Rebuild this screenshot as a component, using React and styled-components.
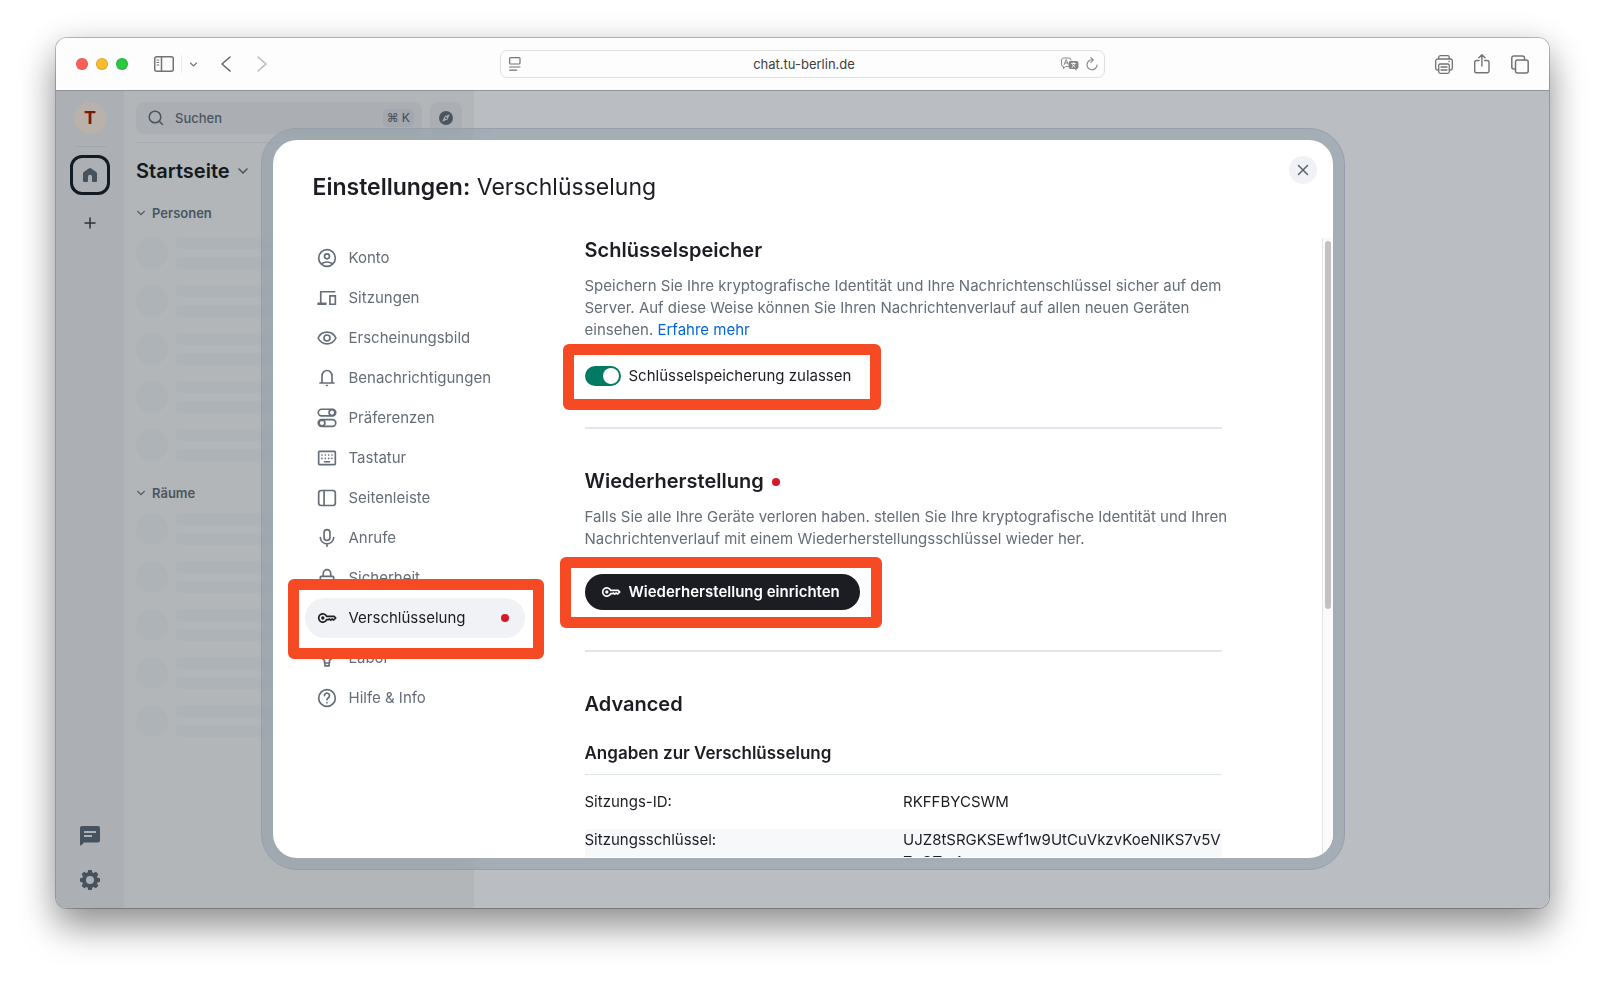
import React, { useState } from "react";
import styled, { createGlobalStyle, css } from "styled-components";

const Global = createGlobalStyle`
  *, *::before, *::after { box-sizing: border-box; }
  body {
    margin: 0;
    background: #fff;
    font-family: Inter, "Liberation Sans", sans-serif;
    color: #1b1d22;
  }
  button { font: inherit; color: inherit; background: none; border: 0; padding: 0; cursor: pointer; }
  h1, h2, h3, p, ul { margin: 0; padding: 0; }
  ul { list-style: none; }
  svg { display: block; flex: none; }
`;

/* ---------- browser window ---------- */

const Page = styled.div`
  height: 100vh;
  min-height: 640px;
  padding: 38px 56px 74px;
  display: flex;
`;

const Window = styled.div`
  flex: 1;
  min-width: 0;
  display: flex;
  flex-direction: column;
  border-radius: 11px;
  overflow: hidden;
  box-shadow: 0 0 0 1px rgba(0, 0, 0, 0.24), 0 20px 36px rgba(0, 0, 0, 0.36), 0 6px 36px rgba(0, 0, 0, 0.14);
`;

const Toolbar = styled.header`
  flex: none;
  height: 53px;
  padding: 0 20px;
  background: #fdfdfd;
  border-bottom: 1px solid #909499;
  display: grid;
  grid-template-columns: 1fr minmax(200px, 605px) 1fr;
  align-items: center;
  color: #737373;
`;

const ToolGroup = styled.div`
  display: flex;
  align-items: center;
  gap: ${(p) => p.$gap}px;
  justify-content: ${(p) => (p.$end ? "flex-end" : "flex-start")};
`;

const Light = styled.button`
  width: 12px;
  height: 12px;
  border-radius: 50%;
  background: ${(p) => p.$color};
  border: 1px solid rgba(0, 0, 0, 0.12);
`;

const SidebarTools = styled.div`
  display: flex;
  align-items: center;
  gap: 7px;
  margin: 0 15px 0 18px;
`;

const ToolDivider = styled.span`
  width: 1px;
  height: 18px;
  background: #e9e9e9;
`;

const NavArrows = styled.div`
  display: flex;
  gap: 26px;
`;

const AddressBar = styled.div`
  height: 28px;
  padding: 0 6px 0 8px;
  border: 1px solid #e0e0e0;
  border-radius: 7px;
  display: flex;
  align-items: center;
  gap: 7px;
`;

const Address = styled.input`
  flex: 1;
  min-width: 0;
  border: 0;
  outline: 0;
  background: none;
  padding: 0 0 0 26px;
  text-align: center;
  font: 400 13px/16px Inter, sans-serif;
  color: #404040;
`;

/* ---------- chat app behind the dialog ---------- */

const AppArea = styled.div`
  position: relative;
  flex: 1;
  min-height: 0;
  display: flex;
  background: #babdc2;
`;

const Rail = styled.nav`
  flex: none;
  width: 68px;
  padding: 11px 0 8px;
  background: #acb0b5;
  color: #46525d;
  display: flex;
  flex-direction: column;
  align-items: center;
`;

const Avatar = styled.button`
  width: 32px;
  height: 32px;
  border-radius: 50%;
  background: #bbb1ab;
  color: #771a0d;
  font-size: 18px;
  line-height: 32px;
  font-weight: 700;
`;

const RailLine = styled.span`
  width: 32px;
  height: 1px;
  margin: 12px 0 8px;
  background: #a1a6ab;
`;

const HomeButton = styled.button`
  width: 40px;
  height: 40px;
  border: 3px solid #121a23;
  border-radius: 12px;
  display: grid;
  place-items: center;
`;

const RailButton = styled.button`
  width: 40px;
  height: 40px;
  display: grid;
  place-items: center;
  margin-top: ${(p) => p.$top || 0};
  color: ${(p) => (p.$dark ? "#2a333c" : "inherit")};
`;

const RoomPanel = styled.aside`
  flex: none;
  width: 350px;
  padding: 11px 12px;
  background: #b2b6b9;
  color: #4a5560;
  display: flex;
  flex-direction: column;
`;

const SearchRow = styled.div`
  display: flex;
  gap: 8px;
  padding-bottom: 8px;
  border-bottom: 1px solid #a5abb0;
`;

const SearchButton = styled.button`
  flex: 1;
  height: 32px;
  padding: 0 8px 0 12px;
  border-radius: 8px;
  background: #abafb4;
  display: flex;
  align-items: center;
  font-size: 13px;
  line-height: 18px;
  font-weight: 500;
  span { flex: 1; text-align: left; padding-left: 11px; }
  kbd {
    height: 18px;
    padding: 0 4px;
    border-radius: 5px;
    background: #a3a8ae;
    font: 500 12px/18px Inter, "DejaVu Sans", sans-serif;
  }
`;

const ExploreButton = styled.button`
  width: 32px;
  height: 32px;
  border-radius: 8px;
  background: #abafb4;
  display: grid;
  place-items: center;
`;

const PanelTitle = styled.button`
  display: flex;
  align-items: center;
  gap: 7px;
  height: 56px;
  font-size: 20px;
  font-weight: 600;
  color: #111921;
  svg { color: #46525d; }
`;

const GroupTitle = styled.button`
  display: flex;
  align-items: center;
  gap: 6px;
  height: 28px;
  font-size: 13px;
  font-weight: 600;
`;

const RoomGroup = styled.section`
  display: flex;
  flex-direction: column;
  gap: ${(p) => p.$gap}px;
  margin-bottom: 18px;
`;

const Placeholders = styled.div`
  display: grid;
  row-gap: 16px;
`;

const Placeholder = styled.div`
  display: grid;
  grid-template-columns: 32px 1fr;
  grid-template-rows: 12px 12px;
  gap: 8px 7px;
  &::before {
    content: "";
    grid-row: 1 / 3;
    border-radius: 50%;
    background: #aeb3b7;
  }
  span { background: #aeb3b7; border-radius: 6px; }
`;

/* ---------- settings dialog ---------- */

const Backdrop = styled.div`
  position: absolute;
  inset: 0;
  display: flex;
  align-items: center;
  justify-content: center;
  padding: 37px 32px 38px;
`;

const Glass = styled.div`
  width: 100%;
  max-width: 1084px;
  height: 100%;
  padding: 11px;
  border: 1px solid #969fab;
  border-radius: 36px;
  background: rgba(136, 150, 164, 0.42);
  backdrop-filter: blur(12px);
  display: flex;
`;

const Dialog = styled.div`
  position: relative;
  flex: 1;
  min-width: 0;
  border-radius: 24px;
  background: #fff;
  display: flex;
  flex-direction: column;
  overflow: hidden;
`;

const DialogHeader = styled.div`
  flex: none;
  height: 98px;
  padding: 16px 16px 0 40px;
  display: flex;
  justify-content: space-between;
  align-items: flex-start;
`;

const Title = styled.h1`
  font-size: 23px;
  line-height: 32px;
  font-weight: 400;
  padding-top: 15px;
  strong { font-weight: 600; }
`;

const CloseButton = styled.button`
  width: 28px;
  height: 28px;
  border-radius: 50%;
  background: #f0f2f5;
  color: #5a636e;
  display: grid;
  place-items: center;
`;

const DialogBody = styled.div`
  flex: 1;
  min-height: 0;
  display: flex;
`;

const Tabs = styled.ul`
  flex: none;
  width: 220px;
  margin: 0 32px;
`;

const TabButton = styled.button`
  width: 100%;
  height: 40px;
  padding: 0 16px 0 12px;
  display: flex;
  align-items: center;
  gap: 12px;
  border-radius: 20px;
  font-size: 15px;
  line-height: 22px;
  text-align: left;
  color: #656d77;
  span { flex: 1; }
  ${(p) =>
    p.$active &&
    css`
      background: #f0f2f5;
      color: #1b1d22;
    `}
`;

const Dot = styled.i`
  flex: none;
  width: 8px;
  height: 8px;
  border-radius: 50%;
  background: #d51928;
`;

const Marked = styled.div`
  position: relative;
  width: ${(p) => (p.$fit ? "fit-content" : "auto")};
  &::after {
    content: "";
    position: absolute;
    inset: ${(p) => p.$inset};
    border: 11px solid #f64a25;
    border-radius: 6px;
    pointer-events: none;
    z-index: 2;
  }
`;

const TabPanel = styled.div`
  flex: 1;
  min-width: 0;
  margin-bottom: 1px;
  padding: 0 100px 0 28px;
  overflow: hidden;
`;

const Section = styled.section`
  padding-bottom: ${(p) => p.$bottom}px;
  margin-bottom: 40px;
  border-bottom: 2px solid #e1e6ec;
  &:last-child { border: 0; margin: 0; }
`;

const Heading = styled.h2`
  display: flex;
  align-items: center;
  gap: 8px;
  font-size: 20px;
  line-height: 25px;
  font-weight: 600;
`;

const Text = styled.p`
  margin: 12px -12px 0 0;
  font-size: 15px;
  line-height: 22px;
  color: #656d77;
  a { color: #0467dd; text-decoration: none; }
`;

const SwitchLabel = styled.label`
  display: flex;
  align-items: center;
  gap: 8px;
  height: 20px;
  font-size: 15px;
  line-height: 18px;
  font-weight: 400;
`;

const Switch = styled.input`
  appearance: none;
  width: 36px;
  height: 20px;
  margin: 0;
  padding: 2px;
  border-radius: 10px;
  background: ${(p) => (p.checked ? "#007a61" : "#818a95")};
  display: flex;
  justify-content: ${(p) => (p.checked ? "flex-end" : "flex-start")};
  &::before {
    content: "";
    width: 16px;
    height: 16px;
    border-radius: 50%;
    background: #fff;
  }
`;

const PrimaryButton = styled.button`
  height: 36px;
  padding: 0 20px 0 16px;
  border-radius: 18px;
  background: #1b1d22;
  color: #fff;
  display: flex;
  align-items: center;
  gap: 8px;
  font-size: 15px;
  line-height: 18px;
  font-weight: 600;
`;

const Spaced = styled.div`
  margin-top: ${(p) => p.$top}px;
`;

const SubHeading = styled.h3`
  margin-top: 24px;
  padding-bottom: 9px;
  border-bottom: 1px solid #dde4ea;
  font-size: 17px;
  line-height: 24px;
  font-weight: 600;
`;

const Details = styled.table`
  width: 100%;
  margin-top: 16px;
  table-layout: fixed;
  border-collapse: collapse;
  font-size: 15px;
  line-height: 22px;
  th, td {
    padding: 0 0 16px;
    font-weight: 400;
    text-align: left;
    vertical-align: top;
    overflow-wrap: anywhere;
  }
  tr:nth-child(even) { background: #f7f8fa; }
`;

const ScrollTrack = styled.div`
  flex: none;
  width: 11px;
  padding: 3px 2px;
  border-left: 1px solid #e6e6e6;
  background: #fafafa;
`;

const ScrollThumb = styled.div`
  height: 60%;
  border-radius: 3px;
  background: #c2c2c2;
`;

/* ---------- icons ---------- */

const Svg = ({ size = 20, w, h, box = "0 0 24 24", sw = 2, fill = "none", children }) => (
  <svg
    width={w || size}
    height={h || size}
    viewBox={box}
    fill={fill}
    stroke={fill === "none" ? "currentColor" : "none"}
    strokeWidth={sw}
    strokeLinecap="round"
    strokeLinejoin="round"
    aria-hidden="true"
  >
    {children}
  </svg>
);

const Chevron = ({ size = 12 }) => (
  <Svg size={size} box="0 0 12 12" sw={1.5}><path d="M2 4l4 4 4-4" /></Svg>
);

const KeyIcon = () => (
  <Svg sw={2}>
    <path d="M11.600 10H20.500L22.500 12 20 14.400 18.200 13.200 16.500 14.600 14.800 13.200 13.500 14H11.600A5 5 0 1 1 11.600 10z" />
    <circle cx="7" cy="12" r="2" fill="currentColor" stroke="none" />
  </Svg>
);

const icons = {
  account: (
    <Svg>
      <circle cx="12" cy="12" r="10" />
      <circle cx="12" cy="10" r="3" />
      <path d="M5.5 18.8c1.9-1.3 4-2 6.500-2s4.600.7 6.500 2" />
    </Svg>
  ),
  devices: (
    <Svg>
      <path d="M4.500 18V4.500H21" strokeLinecap="square" />
      <path d="M2 19h8" strokeWidth="3" strokeLinecap="square" />
      <path d="M15.500 9.500H22V19.500H15.500z" strokeLinejoin="miter" />
    </Svg>
  ),
  eye: (
    <Svg>
      <path d="M1.300 12C3.500 7.500 7.400 5 12 5s8.500 2.500 10.700 7c-2.200 4.500-6.100 7-10.700 7s-8.500-2.500-10.700-7z" />
      <circle cx="12" cy="12" r="3.600" />
    </Svg>
  ),
  bell: (
    <Svg>
      <path d="M3.500 18h17M6 18V9.500a6 6.500 0 0 1 12 0V18" />
      <path d="M11.500 21h1" />
    </Svg>
  ),
  prefs: (
    <Svg>
      <rect x="1.500" y="1.500" width="21" height="8" rx="4" />
      <circle cx="18" cy="5.500" r="3.500" />
      <rect x="1.500" y="14" width="21" height="8" rx="4" />
      <circle cx="6" cy="18" r="3.500" />
    </Svg>
  ),
  keyboard: (
    <Svg>
      <rect x="2" y="4" width="20" height="16" rx="1" />
      <path d="M6 8.500h.01M10 8.500h.01M14 8.500h.01M18 8.500h.01M6 12.500h.01M10 12.500h.01M14 12.500h.01M18 12.500h.01M9 16.500h6" />
    </Svg>
  ),
  sidebar: (
    <Svg>
      <rect x="2" y="3" width="20" height="18" rx="3" />
      <path d="M8.500 3v18" />
    </Svg>
  ),
  mic: (
    <Svg>
      <rect x="8.500" y="2" width="7" height="13" rx="3.500" />
      <path d="M4 11.500a8 7.500 0 0 0 16 0M12 19v3" />
    </Svg>
  ),
  lock: (
    <Svg>
      <rect x="4" y="10" width="16" height="12" rx="1" />
      <path d="M7.500 10V6.500a4.500 4.500 0 0 1 9 0V10" />
    </Svg>
  ),
  key: <KeyIcon />,
  labs: (
    <Svg>
      <path d="M9 18v-3a7 7 0 1 1 6 0v3zM9.500 18v3.500h5V18" />
    </Svg>
  ),
  help: (
    <Svg>
      <circle cx="12" cy="12" r="10" />
      <path d="M9 9.300a3 3 0 1 1 4.700 2.400c-1.100.8-1.700 1.300-1.700 2.500M12 17.600h.01" />
    </Svg>
  ),
};

const SidebarGlyph = () => (
  <Svg w={20} h={16} box="0 0 20 16" sw={1.5}>
    <rect x="0.750" y="0.750" width="18.500" height="14.500" rx="2" />
    <path d="M7.500 1v14" />
    <path d="M3 4h1.800M3 6.500h1.800M3 9h1.800" strokeWidth="1" />
  </Svg>
);

const Arrow = ({ right }) => (
  <Svg w={10} h={16} box="0 0 10 16" sw={1.6}>
    <path d={right ? "M1 1l8 7-8 7" : "M9 1L1 8l8 7"} stroke={right ? "#b9b9b9" : "#666"} />
  </Svg>
);

const ReaderGlyph = () => (
  <Svg w={12} h={14} box="0 0 12 14" sw={1.200}>
    <rect x="0.600" y="0.600" width="10.400" height="6.400" rx="1" />
    <path d="M0.600 10h10.400M0.600 13.200h7" />
  </Svg>
);

const TranslateGlyph = () => (
  <Svg w={18} h={14} box="0 0 18 14" sw={1}>
    <path d="M7 9.500H4.500L2.500 11.500V9.500A2 2 0 0 1 .5 7.500V3a2 2 0 0 1 2-2H8a2 2 0 0 1 2 2" stroke="#8a8a8a" />
    <path d="M3.200 7.500l2-5 1.800 4.500M4 6h2.500" stroke="#8a8a8a" />
    <path
      d="M9.500 4h6A2 2 0 0 1 17.500 6v4a2 2 0 0 1-2 2v1.800L13.700 12H9.500a2 2 0 0 1-2-2V6a2 2 0 0 1 2-2z"
      fill="#858585"
      stroke="none"
    />
    <path d="M10.500 6.500h4M12.500 5.500v1M11 10.300c1.500-.8 2.400-1.900 2.700-3.800M11.500 7.500c.5 1.200 1.300 2 2.500 2.700" stroke="#fff" strokeWidth=".8" />
  </Svg>
);

const ReloadGlyph = () => (
  <Svg w={12} h={14} box="0 0 12 14" sw={1.200}>
    <path d="M6.500 2.800A5 5 0 1 0 11 8M4.800.6l2.500 2.300-2.400 2.400" stroke="#8a8a8a" />
  </Svg>
);

const PrintGlyph = () => (
  <Svg w={18} h={19} box="0 0 18 19" sw={1.300}>
    <path d="M3.700 4V2.500A1.800 1.800 0 0 1 5.500.700h7a1.800 1.800 0 0 1 1.800 1.800V4M3.700 15H2.500A1.800 1.800 0 0 1 .700 13.200V6a2 2 0 0 1 2-2h12.600a2 2 0 0 1 2 2v7.200a1.800 1.800 0 0 1-1.800 1.800h-1.200" />
    <rect x="3.700" y="9" width="10.600" height="9.300" rx="1.500" />
    <path d="M6 12h6M6 15h6M14 6.500h.3" />
  </Svg>
);

const ShareGlyph = () => (
  <Svg w={16} h={20} box="0 0 16 20" sw={1.400}>
    <path d="M5 6.500H2.500A1.800 1.800 0 0 0 .700 8.300v8.700a1.800 1.800 0 0 0 1.800 1.800h10.700A1.800 1.800 0 0 0 15 17V8.300a1.800 1.800 0 0 0-1.800-1.800h-2.500M7.900 12V1M4.800 3.800L7.900.8 11 3.800" />
  </Svg>
);

const TabsGlyph = () => (
  <Svg w={18} h={19} box="0 0 18 19" sw={1.500}>
    <rect x="4.500" y="5" width="12.700" height="13" rx="2" />
    <path d="M4.500 14H2.800a2 2 0 0 1-2-2V3a2 2 0 0 1 2-2h8.700a2 2 0 0 1 2 2v2" />
  </Svg>
);

/* ---------- content ---------- */

const tabs = [
  ["account", "Konto"],
  ["devices", "Sitzungen"],
  ["eye", "Erscheinungsbild"],
  ["bell", "Benachrichtigungen"],
  ["prefs", "Präferenzen"],
  ["keyboard", "Tastatur"],
  ["sidebar", "Seitenleiste"],
  ["mic", "Anrufe"],
  ["lock", "Sicherheit"],
  ["key", "Verschlüsselung"],
  ["labs", "Labor"],
  ["help", "Hilfe & Info"],
];

const Rooms = ({ title, gap }) => (
  <RoomGroup $gap={gap}>
    <GroupTitle><Chevron size={10} />{title}</GroupTitle>
    <Placeholders>
      {[0, 1, 2, 3, 4].map((n) => (
        <Placeholder key={n}><span /><span /></Placeholder>
      ))}
    </Placeholders>
  </RoomGroup>
);

const BrowserToolbar = () => (
  <Toolbar>
    <ToolGroup $gap={8}>
      <Light $color="#ff5f57" aria-label="Schließen" />
      <Light $color="#febc2e" aria-label="Minimieren" />
      <Light $color="#28c840" aria-label="Vergrößern" />
      <SidebarTools>
        <button aria-label="Seitenleiste"><SidebarGlyph /></button>
        <ToolDivider />
        <button aria-label="Tabgruppen"><Chevron size={9} /></button>
      </SidebarTools>
      <NavArrows>
        <button aria-label="Zurück"><Arrow /></button>
        <button aria-label="Vorwärts"><Arrow right /></button>
      </NavArrows>
    </ToolGroup>
    <AddressBar>
      <ReaderGlyph />
      <Address aria-label="Adresse" defaultValue="chat.tu-berlin.de" />
      <TranslateGlyph />
      <ReloadGlyph />
    </AddressBar>
    <ToolGroup $gap={21} $end>
      <button aria-label="Drucken"><PrintGlyph /></button>
      <button aria-label="Teilen"><ShareGlyph /></button>
      <button aria-label="Tabübersicht"><TabsGlyph /></button>
    </ToolGroup>
  </Toolbar>
);

const ChatRail = () => (
  <Rail>
    <Avatar>T</Avatar>
    <RailLine />
    <HomeButton aria-label="Startseite">
      <Svg size={16} box="0 0 16 16" fill="currentColor">
        <path d="M1 6.500c0-.6.300-1.200.8-1.500l5-3.500a2 2 0 0 1 2.400 0l5 3.500c.5.300.8.900.8 1.500V14a1 1 0 0 1-1 1h-3a1 1 0 0 1-1-1V9.800a2 2 0 0 0-4 0V14a1 1 0 0 1-1 1H2a1 1 0 0 1-1-1z" />
      </Svg>
    </HomeButton>
    <RailButton $top="8px" $dark aria-label="Space erstellen">
      <Svg size={12} box="0 0 12 12" sw={1.500}><path d="M6 1v10M1 6h10" /></Svg>
    </RailButton>
    <RailButton $top="auto" aria-label="Threads">
      <Svg size={20} box="0 0 20 20" fill="currentColor">
        <path fillRule="evenodd" d="M2 0h16a2 2 0 0 1 2 2v12.500a2 2 0 0 1-2 2H4L1.200 19.300A.7.7 0 0 1 0 18.800V2a2 2 0 0 1 2-2zm2 5v2h12V5zm0 4v2h8V9z" />
      </Svg>
    </RailButton>
    <RailButton $top="4px" aria-label="Schnelleinstellungen">
      <Svg size={20} box="0 0 20 20" fill="currentColor">
        <path
          fillRule="evenodd"
          d="M8.200 0h3.600l.6 2.500 1.300.6 2.200-1.400 2.500 2.500-1.400 2.200.5 1.300 2.500.6v3.500l-2.500.6-.5 1.200 1.400 2.200-2.500 2.500-2.200-1.300-1.300.5-.6 2.500H8.200l-.6-2.500-1.300-.5-2.200 1.300-2.500-2.500L3 13.600l-.5-1.200L0 11.800V8.300l2.500-.6L3 6.400 1.600 4.200l2.500-2.500 2.200 1.400 1.300-.6zM10 6a4 4 0 1 0 0 8 4 4 0 0 0 0-8z"
        />
      </Svg>
    </RailButton>
  </Rail>
);

const ChatPanel = () => (
  <RoomPanel>
    <SearchRow>
      <SearchButton>
        <Svg size={16} box="0 0 16 16" sw={1.500}>
          <circle cx="7" cy="7" r="5.800" />
          <path d="M11.300 11.300L14.500 14.500" />
        </Svg>
        <span>Suchen</span>
        <kbd>⌘ K</kbd>
      </SearchButton>
      <ExploreButton aria-label="Räume erkunden">
        <Svg size={14} box="0 0 14 14" fill="currentColor">
          <path fillRule="evenodd" d="M7 0a7 7 0 1 1 0 14A7 7 0 0 1 7 0zm3.800 3.200L5.500 5.500 3.200 10.800 8.500 8.500zM7 6a1 1 0 1 1 0 2 1 1 0 0 1 0-2z" />
        </Svg>
      </ExploreButton>
    </SearchRow>
    <PanelTitle>Startseite<Chevron size={12} /></PanelTitle>
    <Rooms title="Personen" gap={10} />
    <Rooms title="Räume" gap={6} />
  </RoomPanel>
);

const EncryptionPanel = () => {
  const [allowed, setAllowed] = useState(true);
  return (
    <TabPanel>
      <Section $bottom={41}>
        <Heading>Schlüsselspeicher</Heading>
        <Text>
          Speichern Sie Ihre kryptografische Identität und Ihre Nachrichtenschlüssel sicher auf dem
          Server. Auf diese Weise können Sie Ihren Nachrichtenverlauf auf allen neuen Geräten
          einsehen. <a href="#mehr">Erfahre mehr</a>
        </Text>
        <Spaced $top={25}>
          <Marked $fit $inset="-22px -30px -24px -22px">
            <SwitchLabel>
              <Switch type="checkbox" role="switch" checked={allowed} onChange={() => setAllowed(!allowed)} />
              Schlüsselspeicherung zulassen
            </SwitchLabel>
          </Marked>
        </Spaced>
      </Section>
      <Section $bottom={40}>
        <Heading>Wiederherstellung<Dot /></Heading>
        <Text>
          Falls Sie alle Ihre Geräte verloren haben. stellen Sie Ihre kryptografische Identität und Ihren
          Nachrichtenverlauf mit einem Wiederherstellungsschlüssel wieder her.
        </Text>
        <Spaced $top={24}>
          <Marked $fit $inset="-17px -22px -18px -25px">
            <PrimaryButton><KeyIcon />Wiederherstellung einrichten</PrimaryButton>
          </Marked>
        </Spaced>
      </Section>
      <Section $bottom={0}>
        <Heading>Advanced</Heading>
        <SubHeading>Angaben zur Verschlüsselung</SubHeading>
        <Details>
          <tbody>
            <tr><th scope="row">Sitzungs-ID:</th><td>RKFFBYCSWM</td></tr>
            <tr><th scope="row">Sitzungsschlüssel:</th><td>UJZ8tSRGKSEwf1w9UtCuVkzvKoeNIKS7v5VZoCTxrA</td></tr>
          </tbody>
        </Details>
      </Section>
    </TabPanel>
  );
};

export default function App() {
  return (
    <Page>
      <Global />
      <Window>
        <BrowserToolbar />
        <AppArea>
          <ChatRail />
          <ChatPanel />
          <Backdrop>
            <Glass>
              <Dialog role="dialog" aria-label="Einstellungen">
                <DialogHeader>
                  <Title><strong>Einstellungen:</strong> Verschlüsselung</Title>
                  <CloseButton aria-label="Dialog schließen">
                    <Svg size={12} box="0 0 12 12" sw={1.500}><path d="M1.500 1.500l9 9M10.500 1.500l-9 9" /></Svg>
                  </CloseButton>
                </DialogHeader>
                <DialogBody>
                  <Tabs>
                    {tabs.map(([icon, label]) => {
                      const active = icon === "key";
                      const button = (
                        <TabButton $active={active}>
                          {icons[icon]}
                          <span>{label}</span>
                          {active && <Dot />}
                        </TabButton>
                      );
                      return (
                        <li key={icon}>
                          {active ? <Marked $inset="-19px -19px -21px -17px">{button}</Marked> : button}
                        </li>
                      );
                    })}
                  </Tabs>
                  <EncryptionPanel />
                  <ScrollTrack><ScrollThumb /></ScrollTrack>
                </DialogBody>
              </Dialog>
            </Glass>
          </Backdrop>
        </AppArea>
      </Window>
    </Page>
  );
}
